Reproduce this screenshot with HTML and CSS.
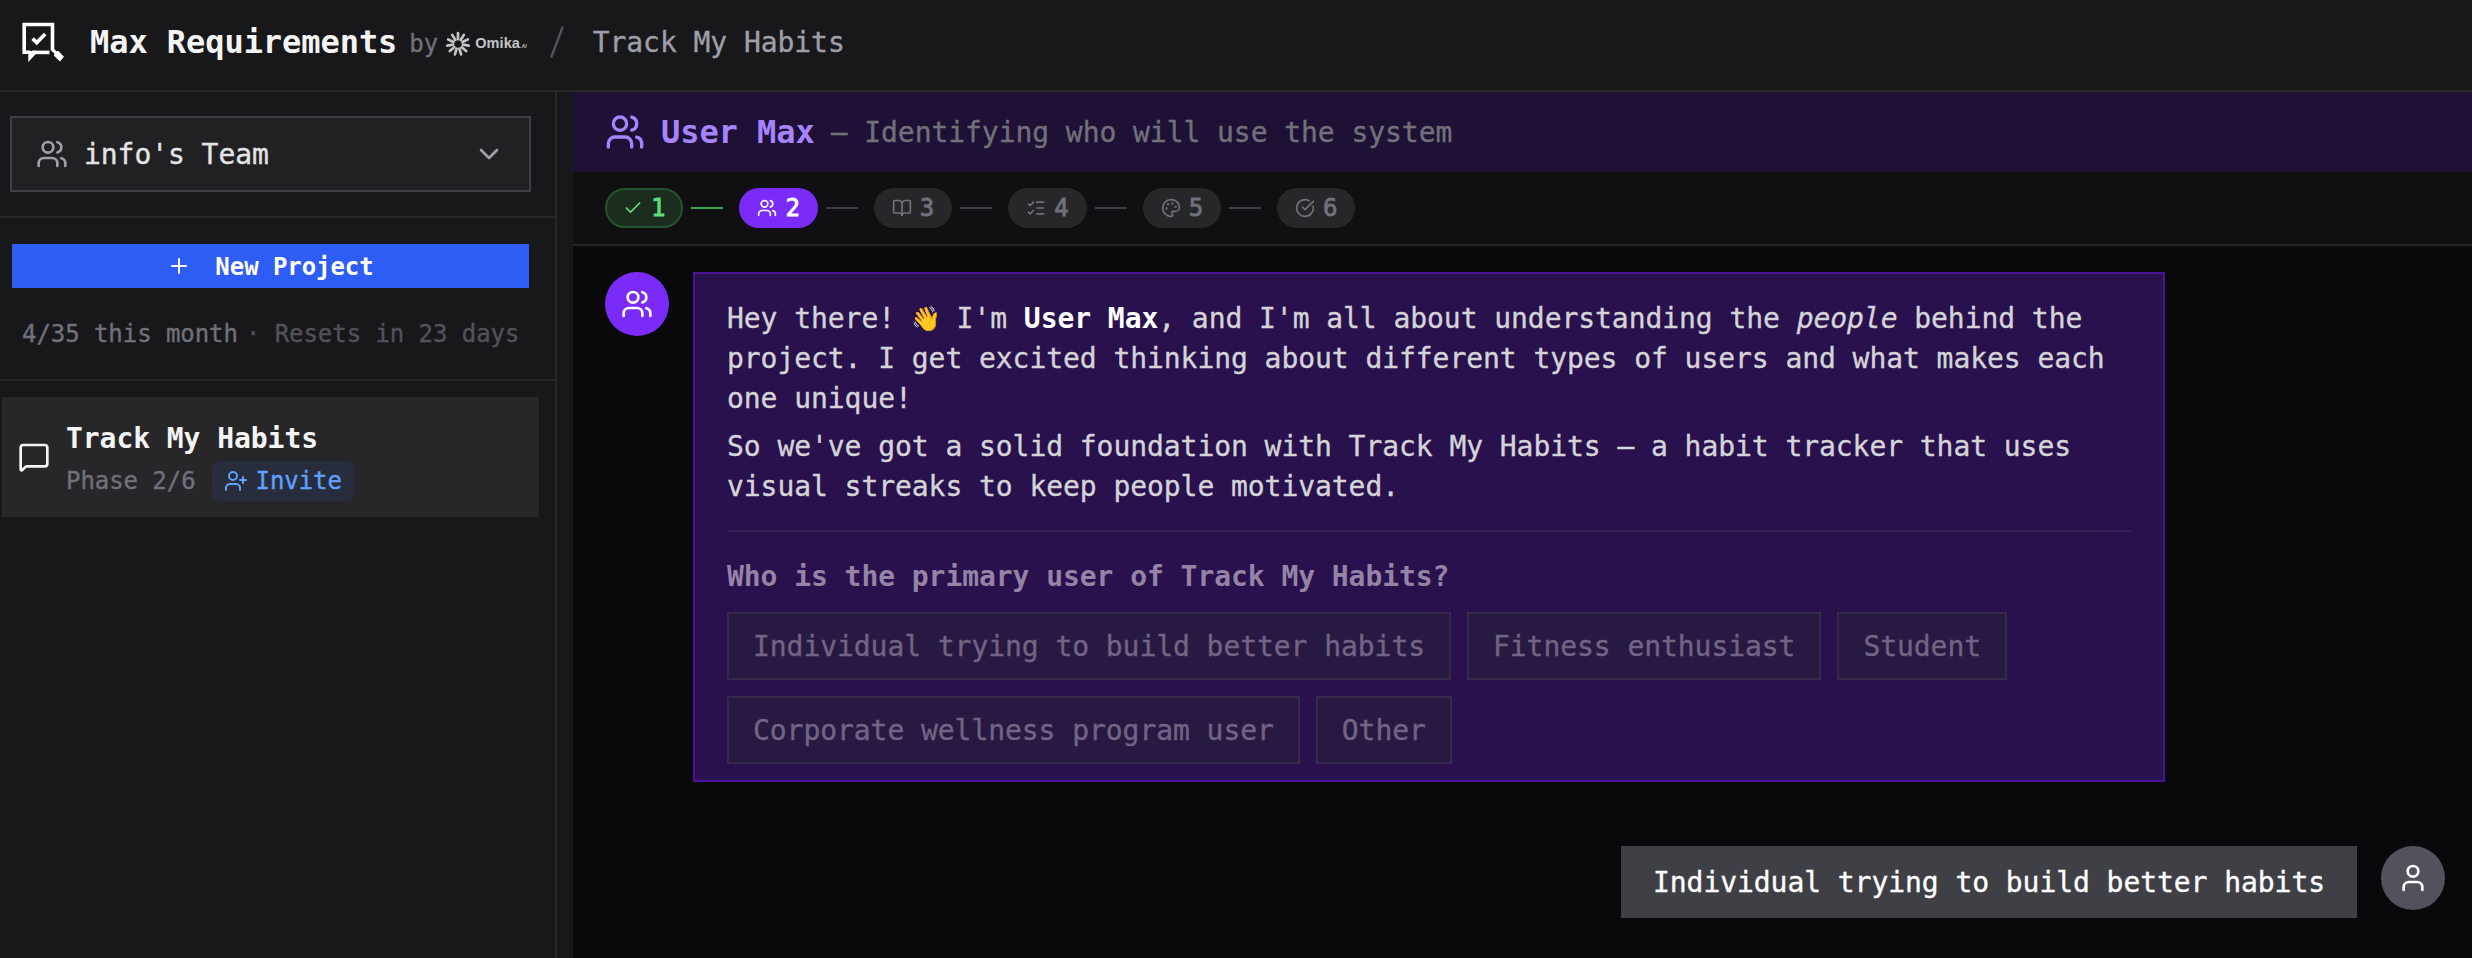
FILE: index.html
```html
<!DOCTYPE html>
<html lang="en">
<head>
    <meta charset="UTF-8">
    <meta name="viewport" content="width=device-width, initial-scale=1.0">
    <title>Max Requirements</title>
    <link rel="stylesheet" href="styles.css">
</head>
<body>
    <svg class="sprite" xmlns="http://www.w3.org/2000/svg">
        <symbol id="users" viewBox="0 0 24 24">
            <path d="M16 21v-2a4 4 0 0 0-4-4H6a4 4 0 0 0-4 4v2"/>
            <path d="M16 3.128a4 4 0 0 1 0 7.744"/>
            <path d="M22 21v-2a4 4 0 0 0-3-3.87"/>
            <circle cx="9" cy="7" r="4"/>
        </symbol>
    </svg>

    <header class="header">
        <svg class="logo" viewBox="0 0 42 42">
            <path class="logo-line" d="M30.5 28V2.5H2.2V30.2H8.2"/>
            <path class="logo-line" d="M13 30.4H27.5"/>
            <path class="logo-fill" d="M6.3 29L6.3 40L13.5 32.2L13.5 28.6L10 28.6L10 29Z"/>
            <path class="logo-line" d="M10.6 16.6L14.8 20.6L23.2 12"/>
            <path class="logo-fill" d="M29 26.5L31.5 26.5L34.5 29.3L36.5 29L42 34.8L38 39.6L32 33.8L32.4 31.6L29 28.5Z"/>
        </svg>
        <h1 class="brand">Max Requirements</h1>
        <div class="byline">
            <span>by</span>
            <svg class="omika-mark" viewBox="0 0 24 24">
                <path d="M12 7.5V2"/>
                <path d="M12 7.5V2" transform="rotate(32.7 12 12)"/>
                <path d="M12 7.5V2" transform="rotate(65.4 12 12)"/>
                <path d="M12 7.5V2" transform="rotate(98.2 12 12)"/>
                <path d="M12 7.5V2" transform="rotate(130.9 12 12)"/>
                <path d="M12 7.5V2" transform="rotate(163.6 12 12)"/>
                <path d="M12 7.5V2" transform="rotate(196.4 12 12)"/>
                <path d="M12 7.5V2" transform="rotate(229.1 12 12)"/>
                <path d="M12 7.5V2" transform="rotate(261.8 12 12)"/>
                <path d="M12 7.5V2" transform="rotate(294.5 12 12)"/>
                <path d="M12 7.5V2" transform="rotate(327.3 12 12)"/>
            </svg>
            <span class="omika">Omika<small>.AI</small></span>
        </div>
        <svg class="slash" viewBox="0 0 14 32"><path d="M12.8 0.5L1.2 31.5"/></svg>
        <span class="crumb">Track My Habits</span>
    </header>

    <div class="layout">
        <aside class="sidebar">
            <div class="team">
                <button class="team-select">
                    <svg class="icon icon-32"><use href="#users"/></svg>
                    <span class="team-name">info's Team</span>
                    <svg class="icon icon-32" viewBox="0 0 24 24"><path d="m6 9 6 6 6-6"/></svg>
                </button>
            </div>
            <div class="new-project">
                <button class="new-btn">
                    <svg class="icon icon-24" viewBox="0 0 24 24"><path d="M5 12h14"/><path d="M12 5v14"/></svg>
                    <span>New Project</span>
                </button>
                <div class="usage">
                    <span>4/35 this month</span>
                    <span class="resets">· Resets in 23 days</span>
                </div>
            </div>
            <div class="project">
                <svg class="icon icon-32" viewBox="0 0 24 24"><path d="M22 17a2 2 0 0 1-2 2H6.828a2 2 0 0 0-1.414.586l-2.202 2.202A.71.71 0 0 1 2 21.286V5a2 2 0 0 1 2-2h16a2 2 0 0 1 2 2z"/></svg>
                <div class="project-info">
                    <div class="project-name">Track My Habits</div>
                    <div class="project-meta">
                        <span>Phase 2/6</span>
                        <span class="invite">
                            <svg class="icon icon-24" viewBox="0 0 24 24"><path d="M16 21v-2a4 4 0 0 0-4-4H6a4 4 0 0 0-4 4v2"/><circle cx="9" cy="7" r="4"/><path d="M19 8v6"/><path d="M22 11h-6"/></svg>
                            Invite
                        </span>
                    </div>
                </div>
            </div>
        </aside>

        <main class="main">
            <div class="banner">
                <svg class="icon icon-40"><use href="#users"/></svg>
                <h2>User Max</h2>
                <span class="banner-text">— Identifying who will use the system</span>
            </div>

            <div class="phases">
                <div class="phase done">
                    <svg class="icon icon-20" viewBox="0 0 24 24"><path d="M20 6 9 17l-5-5"/></svg>
                    <span>1</span>
                </div>
                <div class="line done-line"></div>
                <div class="phase active">
                    <svg class="icon icon-20"><use href="#users"/></svg>
                    <span>2</span>
                </div>
                <div class="line"></div>
                <div class="phase">
                    <svg class="icon icon-20" viewBox="0 0 24 24"><path d="M12 7v14"/><path d="M3 18a1 1 0 0 1-1-1V4a1 1 0 0 1 1-1h5a4 4 0 0 1 4 4 4 4 0 0 1 4-4h5a1 1 0 0 1 1 1v13a1 1 0 0 1-1 1h-6a3 3 0 0 0-3 3 3 3 0 0 0-3-3z"/></svg>
                    <span>3</span>
                </div>
                <div class="line"></div>
                <div class="phase">
                    <svg class="icon icon-20" viewBox="0 0 24 24"><path d="M13 5h8"/><path d="M13 12h8"/><path d="M13 19h8"/><path d="m3 17 2 2 4-4"/><path d="m3 7 2 2 4-4"/></svg>
                    <span>4</span>
                </div>
                <div class="line"></div>
                <div class="phase">
                    <svg class="icon icon-20" viewBox="0 0 24 24"><path d="M12 22a1 1 0 0 1 0-20 10 9 0 0 1 10 9 5 5 0 0 1-5 5h-2.25a1.75 1.75 0 0 0-1.4 2.8l.3.4a1.75 1.75 0 0 1-1.4 2.8z"/><circle cx="13.5" cy="6.5" r=".5"/><circle cx="17.5" cy="10.5" r=".5"/><circle cx="6.5" cy="12.5" r=".5"/><circle cx="8.5" cy="7.5" r=".5"/></svg>
                    <span>5</span>
                </div>
                <div class="line"></div>
                <div class="phase">
                    <svg class="icon icon-20" viewBox="0 0 24 24"><path d="M21.801 10A10 10 0 1 1 17 3.335"/><path d="m9 11 3 3L22 4"/></svg>
                    <span>6</span>
                </div>
            </div>

            <div class="chat">
                <div class="message">
                    <div class="avatar">
                        <svg class="icon icon-32"><use href="#users"/></svg>
                    </div>
                    <div class="bubble">
                        <p>Hey there! <span class="emoji">👋</span> I'm <strong>User Max</strong>, and I'm all about understanding the <em>people</em> behind the project. I get excited thinking about different types of users and what makes each one unique!</p>
                        <p>So we've got a solid foundation with Track My Habits – a habit tracker that uses visual streaks to keep people motivated.</p>
                        <div class="question">
                            <div class="question-title">Who is the primary user of Track My Habits?</div>
                            <div class="options">
                                <button>Individual trying to build better habits</button>
                                <button>Fitness enthusiast</button>
                                <button>Student</button>
                                <button>Corporate wellness program user</button>
                                <button>Other</button>
                            </div>
                        </div>
                    </div>
                </div>

                <div class="message mine">
                    <div class="reply">Individual trying to build better habits</div>
                    <div class="avatar">
                        <svg class="icon icon-32" viewBox="0 0 24 24"><path d="M19 21v-2a4 4 0 0 0-4-4H9a4 4 0 0 0-4 4v2"/><circle cx="12" cy="7" r="4"/></svg>
                    </div>
                </div>
            </div>
        </main>
    </div>
</body>
</html>
```
FILE: styles.css
```css
* {
    box-sizing: border-box;
}
body {
    margin: 0;
    height: 958px;
    overflow: hidden;
    display: flex;
    flex-direction: column;
    background-color: #09090b;
    color: #f4f4f5;
    font-family: "DejaVu Sans Mono", "Liberation Mono", monospace;
    font-size: 28px;
    line-height: 40px;
    letter-spacing: -0.00205em;
    white-space: nowrap;
    -webkit-text-stroke: 0.35px currentColor;
}
h1, h2, p {
    margin: 0;
}
h1, h2, strong {
    -webkit-text-stroke: 0;
}
button {
    font: inherit;
    letter-spacing: inherit;
    color: inherit;
    margin: 0;
    padding: 0;
    border: none;
}
.sprite {
    display: none;
}

/* icons */
.icon {
    flex-shrink: 0;
    fill: none;
    stroke: currentColor;
    stroke-width: 2;
    stroke-linecap: round;
    stroke-linejoin: round;
}
.icon-20 {
    width: 20px;
    height: 20px;
}
.icon-24 {
    width: 24px;
    height: 24px;
}
.icon-32 {
    width: 32px;
    height: 32px;
}
.icon-40 {
    width: 40px;
    height: 40px;
}

/* header */
.header {
    flex-shrink: 0;
    display: flex;
    align-items: center;
    height: 92px;
    padding: 0 22px 8px;
    background-color: #18181b;
    border-bottom: 2px solid #27272a;
}
.logo {
    width: 42px;
    height: 42px;
    margin-top: 4px;
}
.logo-line {
    fill: none;
    stroke: #fff;
    stroke-width: 3.6;
}
.logo-fill {
    fill: #fff;
}
.brand {
    margin-left: 26px;
    padding-top: 1px;
    font-size: 32px;
    font-weight: bold;
}
.byline {
    display: flex;
    align-items: center;
    margin-left: 12px;
    padding-top: 6px;
    font-size: 24px;
    color: #71717b;
}
.omika-mark {
    width: 26px;
    height: 26px;
    margin-left: 7px;
    fill: none;
    stroke: #c4c4c6;
    stroke-width: 2.5;
    stroke-linecap: round;
}
.omika {
    margin-left: 4px;
    font-family: "Liberation Sans", Arial, sans-serif;
    font-size: 14.5px;
    font-weight: bold;
    letter-spacing: 0.1px;
    color: #c4c4c6;
    -webkit-text-stroke: 0;
}
.omika small {
    font-size: 5px;
    font-style: italic;
}
.slash {
    width: 14px;
    height: 32px;
    margin: 2px 29px 0 23px;
    fill: none;
    stroke: #52525c;
    stroke-width: 2.4;
}
.crumb {
    padding-top: 4px;
    color: #9f9fa9;
}

/* sidebar */
.layout {
    flex: 1;
    display: flex;
    min-height: 0;
    background-color: #18181b;
}
.sidebar {
    flex-shrink: 0;
    width: 557px;
    margin-right: 16px;
    border-right: 2px solid #27272a;
}
.team {
    height: 126px;
    padding: 24px 24px 24px 10px;
    border-bottom: 2px solid #27272a;
}
.team-select {
    display: flex;
    align-items: center;
    gap: 16px;
    width: 521px;
    height: 76px;
    padding: 0 24px;
    background-color: #212123;
    border: 2px solid #3f3f46;
    color: #9f9fa9;
}
.team-name {
    flex: 1;
    padding-top: 2px;
    text-align: left;
    color: #e4e4e7;
}
.new-project {
    height: 163px;
    padding: 26px 26px 0 12px;
    border-bottom: 2px solid #27272a;
}
.new-btn {
    display: flex;
    align-items: center;
    justify-content: center;
    gap: 24px;
    width: 517px;
    height: 44px;
    background-color: #2d5df4;
    color: #fff;
    font-size: 24px;
    font-weight: bold;
    -webkit-text-stroke: 0;
}
.new-btn span {
    padding-top: 2px;
}
.usage {
    display: flex;
    gap: 8px;
    margin-top: 26px;
    padding-left: 10px;
    font-size: 24px;
    color: #71717b;
}
.resets {
    color: #52525c;
}
.project {
    display: flex;
    align-items: center;
    gap: 16px;
    width: 537px;
    height: 120px;
    margin: 16px 0 0 2px;
    padding-left: 16px;
    background-color: #27272a;
}
.project-info {
    display: flex;
    flex-direction: column;
    gap: 2px;
    margin-top: 6px;
}
.project-name {
    font-weight: bold;
    -webkit-text-stroke: 0;
}
.project-meta {
    display: flex;
    align-items: center;
    gap: 16px;
    font-size: 24px;
    color: #71717b;
}
.invite {
    display: flex;
    align-items: center;
    gap: 8px;
    height: 40px;
    padding: 0 12px;
    border-radius: 8px;
    background-color: #282d3d;
    color: #60a0ff;
}

/* main */
.main {
    flex: 1;
    min-width: 0;
    background-color: #09090b;
}
.banner {
    display: flex;
    align-items: center;
    gap: 16px;
    height: 80px;
    padding: 0 32px;
    background-color: #1f1036;
    color: #a684ff;
}
.banner h2 {
    font-size: 32px;
}
.banner-text {
    padding-top: 2px;
    color: #71717b;
}
.phases {
    display: flex;
    align-items: center;
    gap: 16px;
    height: 74px;
    padding: 0 32px;
    background-color: #101012;
    border-bottom: 2px solid #27272a;
}
.phase {
    display: flex;
    align-items: center;
    gap: 8px;
    height: 40px;
    padding: 0 18px;
    border-radius: 20px;
    background-color: #27272a;
    color: #71717b;
    font-size: 24px;
    -webkit-text-stroke: 0.8px currentColor;
}
.phase.done {
    padding: 0 16px;
    border: 2px solid #26552f;
    background-color: #1a2d1f;
    color: #5fdc78;
}
.phase.active {
    background-color: #7a2bf7;
    color: #fff;
}
.line {
    width: 32px;
    height: 2px;
    margin-left: -8px;
    background-color: #3f3f46;
}
.done-line {
    background-color: #3ba64c;
}

/* chat */
.chat {
    display: flex;
    flex-direction: column;
    gap: 64px;
    padding: 26px 27px 0 32px;
}
.message {
    display: flex;
    align-items: flex-start;
    gap: 24px;
}
.avatar {
    flex-shrink: 0;
    display: flex;
    align-items: center;
    justify-content: center;
    width: 64px;
    height: 64px;
    border-radius: 50%;
    background-color: #7a2bf7;
    color: #fff;
}
.bubble {
    width: 1472px;
    padding: 25px 32px 16px;
    background-color: #28114d;
    border: 2px solid #4b139a;
    color: #d4d4d8;
    white-space: normal;
}
.bubble p + p {
    margin-top: 8px;
}
.bubble strong {
    color: #fff;
}
.emoji {
    display: inline-block;
    width: 28px;
    height: 32px;
    font-size: 24px;
    line-height: 30px;
    text-indent: -1px;
    vertical-align: middle;
}
.question {
    margin-top: 23px;
    padding-top: 25px;
    border-top: 2px solid #352053;
}
.question-title {
    font-weight: bold;
    color: #9583a6;
    -webkit-text-stroke: 0;
}
.options {
    display: flex;
    flex-wrap: wrap;
    gap: 16px;
    margin-top: 15px;
}
.options button {
    height: 68px;
    padding: 2px 24px 0;
    background-color: #281942;
    border: 2px solid #352a4a;
    color: #726484;
}
.mine {
    justify-content: flex-end;
}
.reply {
    height: 72px;
    padding: 17px 32px 15px;
    background-color: #3f3f46;
    color: #fff;
}
.mine .avatar {
    background-color: #52525c;
}
```
